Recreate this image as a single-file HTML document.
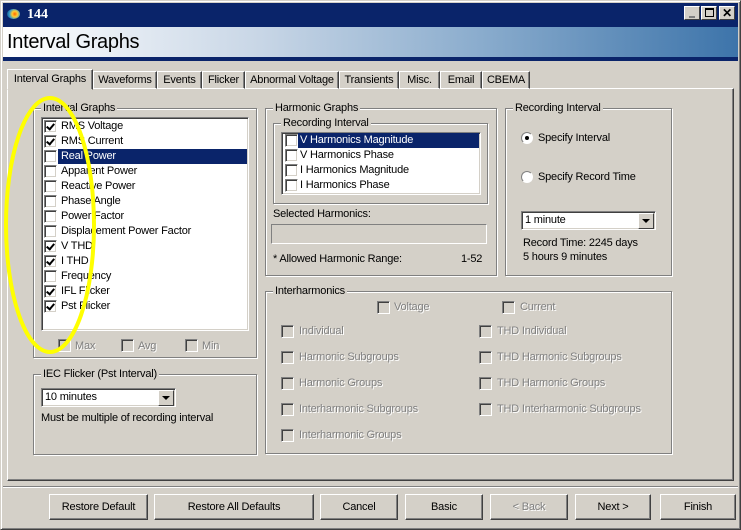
<!DOCTYPE html><html><head><style>
*{margin:0;padding:0;box-sizing:border-box}
body{width:741px;height:530px;background:#d4d0c8;font-family:"Liberation Sans",sans-serif;font-size:11px;letter-spacing:-0.2px;color:#000;position:relative;overflow:hidden}
.a{position:absolute;white-space:nowrap}
.g{position:absolute;border:1px solid #808080;box-shadow:1px 1px 0 #fff,inset 1px 1px 0 #fff}
.gl{position:absolute;background:#d4d0c8;padding:0 2px;white-space:nowrap;line-height:12px;font-size:11px}
.cb{position:absolute;width:13px;height:13px;background:#fff;border:1px solid;border-color:#808080 #fff #fff #808080;box-shadow:inset 1px 1px 0 #404040,inset -1px -1px 0 #d4d0c8}
.cb.c::after{content:"";position:absolute;left:3px;top:1px;width:3px;height:6px;border:solid #000;border-width:0 2px 2px 0;transform:rotate(40deg)}
.cb.d{background:#d4d0c8}
.dis{color:#808080;text-shadow:1px 1px 0 #fff}
.sunk{position:absolute;background:#fff;border:1px solid;border-color:#808080 #fff #fff #808080;box-shadow:inset 1px 1px 0 #404040,inset -1px -1px 0 #d4d0c8}
.btn{position:absolute;top:494px;height:26px;border:1px solid;border-color:#fff #404040 #404040 #fff;box-shadow:inset -1px -1px 0 #808080;text-align:center;line-height:24px;font-size:11px;background:#d4d0c8}
.tab{position:absolute;top:71px;height:18px;border:1px solid;border-color:#fff #404040 transparent #fff;box-shadow:inset -1px 0 0 #808080;text-align:center;line-height:16px;font-size:11px}
.dd{position:absolute;width:16px;height:16px;right:1px;top:1px;background:#d4d0c8;border:1px solid;border-color:#fff #404040 #404040 #fff}
.dd::after{content:"";position:absolute;left:3px;top:5px;border:4px solid transparent;border-top:4px solid #000;border-bottom:0}
.row{position:absolute;height:15px;line-height:15px;font-size:11px}
</style></head><body>
<div class="a" style="left:0;top:0;width:741px;height:530px;border:1px solid;border-color:#d4d0c8 #404040 #404040 #d4d0c8;box-shadow:inset 1px 1px 0 #fff,inset -1px -1px 0 #808080"></div>
<div class="a" style="left:3px;top:3px;width:735px;height:24px;background:#0a246a"></div>
<div class="a" style="left:7px;top:9px;width:13px;height:10px;border-radius:50%;background:radial-gradient(circle at 60% 50%,#f60 0,#fc3 30%,#39c 60%,#036 100%)"></div>
<div class="a" style="left:27px;top:7px;color:#fff;font-family:'Liberation Serif',serif;font-weight:bold;font-size:14px;letter-spacing:0">144</div>
<div class="a" style="left:684px;top:6px;width:16px;height:14px;background:#d4d0c8;border:1px solid;border-color:#fff #404040 #404040 #fff"><div class="a" style="left:4px;top:9px;width:6px;height:2px;background:#808080"></div></div>
<div class="a" style="left:701px;top:6px;width:16px;height:14px;background:#d4d0c8;border:1px solid;border-color:#fff #404040 #404040 #fff"><div class="a" style="left:3px;top:1px;width:9px;height:9px;border:1px solid #000;border-top-width:2px"></div></div>
<div class="a" style="left:719px;top:6px;width:16px;height:14px;background:#d4d0c8;border:1px solid;border-color:#fff #404040 #404040 #fff;font-weight:bold;font-size:12px;text-align:center;line-height:12px">✕</div>
<div class="a" style="left:3px;top:27px;width:735px;height:30px;background:linear-gradient(90deg,#fff 0%,#c8d6e6 35%,#8aaccd 65%,#3d74aa 100%)"></div>
<div class="a" style="left:7px;top:31px;font-size:20px;letter-spacing:-0.3px">Interval Graphs</div>
<div class="a" style="left:3px;top:57px;width:735px;height:4px;background:#0a246a"></div>
<div class="a" style="left:7px;top:88px;width:727px;height:393px;border:1px solid;border-color:#fff #404040 #404040 #fff;box-shadow:inset -1px -1px 0 #808080"></div>
<div class="tab" style="left:93px;width:64px">Waveforms</div>
<div class="tab" style="left:157px;width:45px">Events</div>
<div class="tab" style="left:202px;width:43px">Flicker</div>
<div class="tab" style="left:245px;width:94px">Abnormal Voltage</div>
<div class="tab" style="left:339px;width:60px">Transients</div>
<div class="tab" style="left:399px;width:41px">Misc.</div>
<div class="tab" style="left:440px;width:42px">Email</div>
<div class="tab" style="left:482px;width:48px">CBEMA</div>
<div class="tab" style="left:7px;top:69px;width:86px;height:21px;background:#d4d0c8;line-height:19px">Interval Graphs</div>
<div class="g" style="left:33px;top:108px;width:224px;height:250px"></div>
<div class="gl" style="left:41px;top:102px">Interval Graphs</div>
<div class="sunk" style="left:41px;top:117px;width:208px;height:214px"></div>
<div class="a" style="left:58px;top:149px;width:189px;height:15px;background:#0a246a"></div>
<div class="cb c" style="left:44px;top:120px"></div><div class="row" style="left:61px;top:119px">RMS Voltage</div>
<div class="cb c" style="left:44px;top:135px"></div><div class="row" style="left:61px;top:134px">RMS Current</div>
<div class="cb" style="left:44px;top:150px"></div><div class="row" style="left:61px;top:149px;color:#fff">Real Power</div>
<div class="cb" style="left:44px;top:165px"></div><div class="row" style="left:61px;top:164px">Apparent Power</div>
<div class="cb" style="left:44px;top:180px"></div><div class="row" style="left:61px;top:179px">Reactive Power</div>
<div class="cb" style="left:44px;top:195px"></div><div class="row" style="left:61px;top:194px">Phase Angle</div>
<div class="cb" style="left:44px;top:210px"></div><div class="row" style="left:61px;top:209px">Power Factor</div>
<div class="cb" style="left:44px;top:225px"></div><div class="row" style="left:61px;top:224px">Displacement Power Factor</div>
<div class="cb c" style="left:44px;top:240px"></div><div class="row" style="left:61px;top:239px">V THD</div>
<div class="cb c" style="left:44px;top:255px"></div><div class="row" style="left:61px;top:254px">I THD</div>
<div class="cb" style="left:44px;top:270px"></div><div class="row" style="left:61px;top:269px">Frequency</div>
<div class="cb c" style="left:44px;top:285px"></div><div class="row" style="left:61px;top:284px">IFL Flicker</div>
<div class="cb c" style="left:44px;top:300px"></div><div class="row" style="left:61px;top:299px">Pst Flicker</div>
<div class="cb d" style="left:58px;top:339px"></div><div class="row dis" style="left:75px;top:339px">Max</div>
<div class="cb d" style="left:121px;top:339px"></div><div class="row dis" style="left:138px;top:339px">Avg</div>
<div class="cb d" style="left:185px;top:339px"></div><div class="row dis" style="left:202px;top:339px">Min</div>
<div class="g" style="left:33px;top:374px;width:224px;height:81px"></div>
<div class="gl" style="left:41px;top:368px">IEC Flicker (Pst Interval)</div>
<div class="sunk" style="left:41px;top:388px;width:135px;height:19px"><div class="a" style="left:3px;top:2px">10 minutes</div><div class="dd"></div></div>
<div class="a" style="left:41px;top:412px">Must be multiple of recording interval</div>
<div class="g" style="left:265px;top:108px;width:232px;height:168px"></div>
<div class="gl" style="left:273px;top:102px">Harmonic Graphs</div>
<div class="g" style="left:273px;top:123px;width:215px;height:81px"></div>
<div class="gl" style="left:281px;top:117px">Recording Interval</div>
<div class="sunk" style="left:281px;top:132px;width:200px;height:63px"></div>
<div class="a" style="left:298px;top:133px;width:181px;height:15px;background:#0a246a"></div>
<div class="cb" style="left:285px;top:134px"></div><div class="row" style="left:300px;top:133px;color:#fff">V Harmonics Magnitude</div>
<div class="cb" style="left:285px;top:149px"></div><div class="row" style="left:300px;top:148px">V Harmonics Phase</div>
<div class="cb" style="left:285px;top:164px"></div><div class="row" style="left:300px;top:163px">I Harmonics Magnitude</div>
<div class="cb" style="left:285px;top:179px"></div><div class="row" style="left:300px;top:178px">I Harmonics Phase</div>
<div class="a" style="left:273px;top:208px">Selected Harmonics:</div>
<div class="a" style="left:271px;top:224px;width:216px;height:20px;border:1px solid;border-color:#808080 #fff #fff #808080"></div>
<div class="a" style="left:273px;top:253px">* Allowed Harmonic Range:</div>
<div class="a" style="left:461px;top:253px">1-52</div>
<div class="g" style="left:505px;top:108px;width:167px;height:168px"></div>
<div class="gl" style="left:513px;top:102px">Recording Interval</div>
<div class="a" style="left:521px;top:132px;width:12px;height:12px;border-radius:50%;background:#fff;border:1px solid;border-color:#808080 #fff #fff #808080"><div class="a" style="left:3px;top:3px;width:4px;height:4px;border-radius:50%;background:#000"></div></div>
<div class="a" style="left:538px;top:132px">Specify Interval</div>
<div class="a" style="left:521px;top:171px;width:12px;height:12px;border-radius:50%;background:#fff;border:1px solid;border-color:#808080 #fff #fff #808080"></div>
<div class="a" style="left:538px;top:171px">Specify Record Time</div>
<div class="sunk" style="left:521px;top:211px;width:135px;height:19px"><div class="a" style="left:3px;top:2px">1 minute</div><div class="dd"></div></div>
<div class="a" style="left:523px;top:236px;line-height:14px">Record Time: 2245 days<br>5 hours 9 minutes</div>
<div class="g" style="left:265px;top:291px;width:407px;height:163px"></div>
<div class="gl" style="left:273px;top:285px">Interharmonics</div>
<div class="cb d" style="left:377px;top:301px"></div><div class="row dis" style="left:394px;top:300px">Voltage</div>
<div class="cb d" style="left:502px;top:301px"></div><div class="row dis" style="left:520px;top:300px">Current</div>
<div class="cb d" style="left:281px;top:325px"></div><div class="row dis" style="left:299px;top:324px">Individual</div>
<div class="cb d" style="left:281px;top:351px"></div><div class="row dis" style="left:299px;top:350px">Harmonic Subgroups</div>
<div class="cb d" style="left:281px;top:377px"></div><div class="row dis" style="left:299px;top:376px">Harmonic Groups</div>
<div class="cb d" style="left:281px;top:403px"></div><div class="row dis" style="left:299px;top:402px">Interharmonic Subgroups</div>
<div class="cb d" style="left:281px;top:429px"></div><div class="row dis" style="left:299px;top:428px">Interharmonic Groups</div>
<div class="cb d" style="left:479px;top:325px"></div><div class="row dis" style="left:497px;top:324px">THD Individual</div>
<div class="cb d" style="left:479px;top:351px"></div><div class="row dis" style="left:497px;top:350px">THD Harmonic Subgroups</div>
<div class="cb d" style="left:479px;top:377px"></div><div class="row dis" style="left:497px;top:376px">THD Harmonic Groups</div>
<div class="cb d" style="left:479px;top:403px"></div><div class="row dis" style="left:497px;top:402px">THD Interharmonic Subgroups</div>
<div class="a" style="left:3px;top:486px;width:735px;height:2px;border-top:1px solid #808080;border-bottom:1px solid #fff"></div>
<div class="btn" style="left:49px;width:99px">Restore Default</div>
<div class="btn" style="left:154px;width:160px">Restore All Defaults</div>
<div class="btn" style="left:320px;width:78px">Cancel</div>
<div class="btn" style="left:405px;width:78px">Basic</div>
<div class="btn dis" style="left:490px;width:78px">&lt; Back</div>
<div class="btn" style="left:575px;width:76px">Next &gt;</div>
<div class="btn" style="left:660px;width:76px">Finish</div>
<svg class="a" style="left:0;top:0" width="741" height="530"><ellipse cx="50" cy="225" rx="44" ry="127" fill="none" stroke="#ffff00" stroke-width="4"/></svg>
</body></html>
